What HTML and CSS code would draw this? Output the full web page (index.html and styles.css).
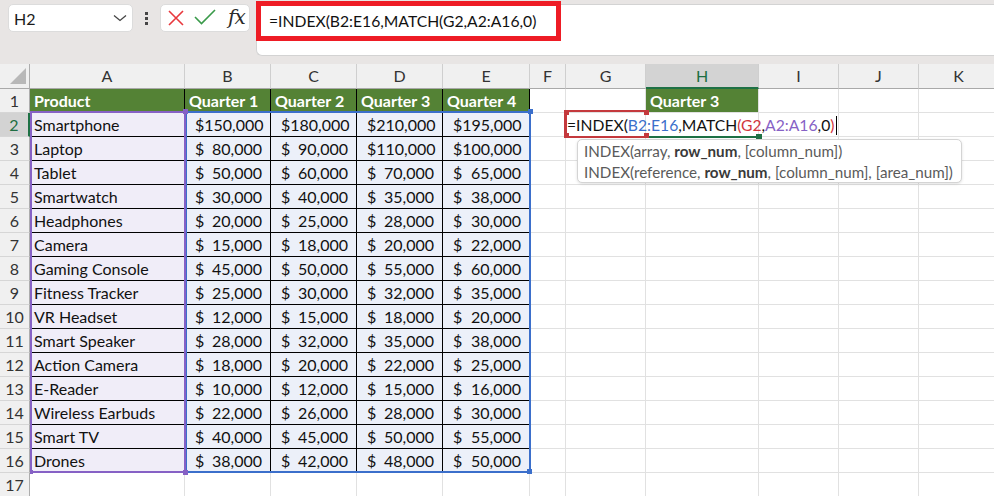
FILE: index.html
```html
<!DOCTYPE html>
<html lang="en">
<head>
    <meta charset="UTF-8">
    <title>INDEX MATCH</title>
    <link rel="stylesheet" href="styles.css">
</head>
<body>
<div class="app">
    <div class="toolbar">
        <div class="namebox">
            <span>H2</span>
            <svg width="14" height="8" viewBox="0 0 14 8"><path d="M1 1.5 L7 6.5 L13 1.5" fill="none" stroke="#444" stroke-width="1.3"/></svg>
        </div>
        <div class="more"><i></i><i></i><i></i></div>
        <div class="fxbox">
            <svg class="ico" width="56" height="26" viewBox="0 0 56 26">
                <path d="M8 6 L22 20 M22 6 L8 20" stroke="#e8383d" stroke-width="1.6" fill="none"/>
                <path d="M34 12 L40.5 18.5 L54 5" stroke="#3a9a4a" stroke-width="1.6" fill="none"/>
            </svg>
            <span class="fx">fx</span>
        </div>
        <div class="formula">
            <span class="ftext">=INDEX(B2:E16,MATCH(G2,A2:A16,0)</span>
            <div class="mark"></div>
        </div>
    </div>

    <div class="sheet">
        <div class="row head">
            <div class="corner"><svg width="16" height="16" viewBox="0 0 16 16"><polygon points="16,0 16,16 0,16" fill="#b8b8b8"/></svg></div>
            <div>A</div><div>B</div><div>C</div><div>D</div><div>E</div><div>F</div><div>G</div><div class="sel">H</div><div>I</div><div>J</div><div>K</div>
        </div>
        <div class="row">
            <div class="rh">1</div>
            <div class="t hd">Product</div><div class="t hd">Quarter 1</div><div class="t hd">Quarter 2</div><div class="t hd">Quarter 3</div><div class="t hd">Quarter 4</div>
            <div class="c"></div><div class="c"></div><div class="hd">Quarter 3</div><div class="c"></div><div class="c"></div><div class="c"></div>
        </div>
        <div class="row">
            <div class="rh sel">2</div>
            <div class="t pa">Smartphone</div>
            <div class="t bl n"><span>$</span><span>150,000</span></div><div class="t bl n"><span>$</span><span>180,000</span></div><div class="t bl n"><span>$</span><span>210,000</span></div><div class="t bl n"><span>$</span><span>195,000</span></div>
            <div class="c"></div><div class="c"></div><div class="c"></div><div class="c"></div><div class="c"></div><div class="c"></div>
        </div>
        <div class="row">
            <div class="rh">3</div>
            <div class="t pa">Laptop</div>
            <div class="t bl n"><span>$</span><span>80,000</span></div><div class="t bl n"><span>$</span><span>90,000</span></div><div class="t bl n"><span>$</span><span>110,000</span></div><div class="t bl n"><span>$</span><span>100,000</span></div>
            <div class="c"></div><div class="c"></div><div class="c"></div><div class="c"></div><div class="c"></div><div class="c"></div>
        </div>
        <div class="row">
            <div class="rh">4</div>
            <div class="t pa">Tablet</div>
            <div class="t bl n"><span>$</span><span>50,000</span></div><div class="t bl n"><span>$</span><span>60,000</span></div><div class="t bl n"><span>$</span><span>70,000</span></div><div class="t bl n"><span>$</span><span>65,000</span></div>
            <div class="c"></div><div class="c"></div><div class="c"></div><div class="c"></div><div class="c"></div><div class="c"></div>
        </div>
        <div class="row">
            <div class="rh">5</div>
            <div class="t pa">Smartwatch</div>
            <div class="t bl n"><span>$</span><span>30,000</span></div><div class="t bl n"><span>$</span><span>40,000</span></div><div class="t bl n"><span>$</span><span>35,000</span></div><div class="t bl n"><span>$</span><span>38,000</span></div>
            <div class="c"></div><div class="c"></div><div class="c"></div><div class="c"></div><div class="c"></div><div class="c"></div>
        </div>
        <div class="row">
            <div class="rh">6</div>
            <div class="t pa">Headphones</div>
            <div class="t bl n"><span>$</span><span>20,000</span></div><div class="t bl n"><span>$</span><span>25,000</span></div><div class="t bl n"><span>$</span><span>28,000</span></div><div class="t bl n"><span>$</span><span>30,000</span></div>
            <div class="c"></div><div class="c"></div><div class="c"></div><div class="c"></div><div class="c"></div><div class="c"></div>
        </div>
        <div class="row">
            <div class="rh">7</div>
            <div class="t pa">Camera</div>
            <div class="t bl n"><span>$</span><span>15,000</span></div><div class="t bl n"><span>$</span><span>18,000</span></div><div class="t bl n"><span>$</span><span>20,000</span></div><div class="t bl n"><span>$</span><span>22,000</span></div>
            <div class="c"></div><div class="c"></div><div class="c"></div><div class="c"></div><div class="c"></div><div class="c"></div>
        </div>
        <div class="row">
            <div class="rh">8</div>
            <div class="t pa">Gaming Console</div>
            <div class="t bl n"><span>$</span><span>45,000</span></div><div class="t bl n"><span>$</span><span>50,000</span></div><div class="t bl n"><span>$</span><span>55,000</span></div><div class="t bl n"><span>$</span><span>60,000</span></div>
            <div class="c"></div><div class="c"></div><div class="c"></div><div class="c"></div><div class="c"></div><div class="c"></div>
        </div>
        <div class="row">
            <div class="rh">9</div>
            <div class="t pa">Fitness Tracker</div>
            <div class="t bl n"><span>$</span><span>25,000</span></div><div class="t bl n"><span>$</span><span>30,000</span></div><div class="t bl n"><span>$</span><span>32,000</span></div><div class="t bl n"><span>$</span><span>35,000</span></div>
            <div class="c"></div><div class="c"></div><div class="c"></div><div class="c"></div><div class="c"></div><div class="c"></div>
        </div>
        <div class="row">
            <div class="rh">10</div>
            <div class="t pa">VR Headset</div>
            <div class="t bl n"><span>$</span><span>12,000</span></div><div class="t bl n"><span>$</span><span>15,000</span></div><div class="t bl n"><span>$</span><span>18,000</span></div><div class="t bl n"><span>$</span><span>20,000</span></div>
            <div class="c"></div><div class="c"></div><div class="c"></div><div class="c"></div><div class="c"></div><div class="c"></div>
        </div>
        <div class="row">
            <div class="rh">11</div>
            <div class="t pa">Smart Speaker</div>
            <div class="t bl n"><span>$</span><span>28,000</span></div><div class="t bl n"><span>$</span><span>32,000</span></div><div class="t bl n"><span>$</span><span>35,000</span></div><div class="t bl n"><span>$</span><span>38,000</span></div>
            <div class="c"></div><div class="c"></div><div class="c"></div><div class="c"></div><div class="c"></div><div class="c"></div>
        </div>
        <div class="row">
            <div class="rh">12</div>
            <div class="t pa">Action Camera</div>
            <div class="t bl n"><span>$</span><span>18,000</span></div><div class="t bl n"><span>$</span><span>20,000</span></div><div class="t bl n"><span>$</span><span>22,000</span></div><div class="t bl n"><span>$</span><span>25,000</span></div>
            <div class="c"></div><div class="c"></div><div class="c"></div><div class="c"></div><div class="c"></div><div class="c"></div>
        </div>
        <div class="row">
            <div class="rh">13</div>
            <div class="t pa">E-Reader</div>
            <div class="t bl n"><span>$</span><span>10,000</span></div><div class="t bl n"><span>$</span><span>12,000</span></div><div class="t bl n"><span>$</span><span>15,000</span></div><div class="t bl n"><span>$</span><span>16,000</span></div>
            <div class="c"></div><div class="c"></div><div class="c"></div><div class="c"></div><div class="c"></div><div class="c"></div>
        </div>
        <div class="row">
            <div class="rh">14</div>
            <div class="t pa">Wireless Earbuds</div>
            <div class="t bl n"><span>$</span><span>22,000</span></div><div class="t bl n"><span>$</span><span>26,000</span></div><div class="t bl n"><span>$</span><span>28,000</span></div><div class="t bl n"><span>$</span><span>30,000</span></div>
            <div class="c"></div><div class="c"></div><div class="c"></div><div class="c"></div><div class="c"></div><div class="c"></div>
        </div>
        <div class="row">
            <div class="rh">15</div>
            <div class="t pa">Smart TV</div>
            <div class="t bl n"><span>$</span><span>40,000</span></div><div class="t bl n"><span>$</span><span>45,000</span></div><div class="t bl n"><span>$</span><span>50,000</span></div><div class="t bl n"><span>$</span><span>55,000</span></div>
            <div class="c"></div><div class="c"></div><div class="c"></div><div class="c"></div><div class="c"></div><div class="c"></div>
        </div>
        <div class="row">
            <div class="rh">16</div>
            <div class="t pa">Drones</div>
            <div class="t bl n"><span>$</span><span>38,000</span></div><div class="t bl n"><span>$</span><span>42,000</span></div><div class="t bl n"><span>$</span><span>48,000</span></div><div class="t bl n"><span>$</span><span>50,000</span></div>
            <div class="c"></div><div class="c"></div><div class="c"></div><div class="c"></div><div class="c"></div><div class="c"></div>
        </div>
        <div class="row">
            <div class="rh">17</div>
            <div class="c"></div><div class="c"></div><div class="c"></div><div class="c"></div><div class="c"></div><div class="c"></div><div class="c"></div><div class="c"></div><div class="c"></div><div class="c"></div><div class="c"></div>
        </div>

        <!-- reference highlights while editing -->
        <div class="rng rng-blue"></div>
        <div class="rng rng-purple"></div>
        <div class="sq sq-blue" style="left:528px;top:45px"></div>
        <div class="sq sq-blue" style="left:527px;top:405px"></div>
        <div class="sq sq-purple" style="left:183px;top:45px"></div>
        <div class="sq sq-purple" style="left:183px;top:406px"></div>
        <div class="sq sq-purple small" style="left:30px;top:406px"></div>
        <div class="rng rng-red"></div>
        <div class="sq sq-red" style="left:564px;top:46px"></div>
        <div class="sq sq-red" style="left:644px;top:46px"></div>
        <div class="sq sq-red" style="left:564px;top:69px"></div>
        <div class="sq sq-red" style="left:644px;top:69px"></div>
        <div class="active-line"></div>
        <div class="sq sq-green" style="left:756px;top:70px"></div>

        <div class="edit">=INDEX(<span class="r-blue">B2:E16</span>,MATCH<span class="r-red">(G2</span>,<span class="r-purple">A2:A16</span>,0<span class="r-red">)</span><span class="caret"></span></div>

        <div class="tip">
            <div>INDEX(array, <b>row_num</b>, [column_num])</div>
            <div>INDEX(reference, <b>row_num</b>, [column_num], [area_num])</div>
        </div>
    </div>
</div>
</body>
</html>
```

FILE: styles.css
```css
* {
    box-sizing: border-box;
}
body {
    margin: 0;
    font-family: Lato, "Open Sans", sans-serif;
    background-color: #fff;
    color: #111;
}
.app {
    width: 994px;
    height: 496px;
    overflow: hidden;
}

/* ribbon strip with name box and formula bar */
.toolbar {
    height: 64px;
    background-color: #e8e5e4;
    display: flex;
    align-items: flex-start;
    padding: 4px 0 0 8px;
}
.namebox {
    width: 125px;
    height: 28px;
    background-color: #fff;
    border: 1px solid #dcdcdc;
    border-radius: 5px;
    display: flex;
    align-items: center;
    justify-content: space-between;
    padding: 0 5px 0 5px;
    font-size: 16px;
    color: #1b1b1b;
}
.more {
    width: 27px;
    height: 28px;
    display: flex;
    flex-direction: column;
    align-items: center;
    justify-content: center;
    gap: 2px;
}
.more i {
    display: block;
    width: 3px;
    height: 3px;
    background-color: #454545;
}
.fxbox {
    width: 90px;
    height: 28px;
    background-color: #fff;
    border: 1px solid #dcdcdc;
    border-radius: 5px;
    display: flex;
    align-items: center;
}
.fxbox .ico {
    display: block;
}
.fx {
    font-family: "DejaVu Serif", "Liberation Serif", serif;
    font-style: italic;
    font-size: 20px;
    color: #2b2b2b;
    margin-left: 11px;
    margin-top: -3px;
    letter-spacing: -1px;
}
.formula {
    flex: 1;
    margin-left: 6px;
    height: 52px;
    background-color: #fff;
    border: 1px solid #d3d3d3;
    border-right: none;
    border-radius: 0 0 0 6px;
    position: relative;
    padding: 7px 0 0 12px;
    font-size: 15.7px;
    line-height: 18px;
    color: #111;
}
.formula .mark {
    position: absolute;
    left: -1px;
    top: -4px;
    width: 305px;
    height: 40px;
    border: 5px solid #ee1c25;
}

/* grid */
.sheet {
    position: relative;
    width: 994px;
}
.row {
    display: grid;
    grid-template-columns: 30px 155px 86px 86px 86px 87px 36px 80px 113px 80px 80px 80px;
    height: 24px;
}
.row > div {
    border-right: 1px solid #e1e1e1;
    border-bottom: 1px solid #e1e1e1;
    line-height: 23px;
    font-size: 16px;
    white-space: nowrap;
    overflow: hidden;
    padding: 0 4px;
}
.row.head {
    height: 25px;
}
.row.head > div {
    background-color: #f0f0f0;
    border-right-color: #cfcfcf;
    border-bottom-color: #a9a9a9;
    text-align: center;
    color: #333;
    line-height: 24px;
    padding: 0;
}
.row.head > .corner {
    display: flex;
    align-items: flex-end;
    justify-content: flex-end;
    padding: 0 3px 4px 0;
    border-right-color: #adadad;
}
.row.head > .sel {
    background-color: #d3d3d3;
    color: #1e6e42;
    border-bottom: 2px solid #1e7145;
}
.row > .rh {
    background-color: #f0f0f0;
    text-align: center;
    color: #333;
    padding: 0;
    border-right-color: #adadad;
    border-bottom-color: #d6d6d6;
}
.row > .rh.sel {
    background-color: #d3d3d3;
    color: #1e6e42;
    border-right: 2px solid #1e7145;
}
.row > .t {
    border-right-color: #000;
    border-bottom-color: #000;
}
.row > .hd {
    background-color: #548235;
    color: #fff;
    font-weight: 700;
}
.row > .pa {
    background-color: #f0edf8;
}
.row > .bl {
    background-color: #ecf0f9;
}
.row > .n {
    display: flex;
    justify-content: space-between;
    padding: 0 8px 0 10px;
}

/* range highlights drawn over the cells */
.rng {
    position: absolute;
    border: 2px solid;
}
.rng-purple {
    left: 30px;
    top: 47px;
    width: 156px;
    height: 362px;
    border-color: #8661c5;
}
.rng-blue {
    left: 185px;
    top: 47px;
    width: 346px;
    height: 362px;
    border-color: #3b6fcb;
}
.rng-red {
    left: 564px;
    top: 46px;
    width: 85px;
    height: 28px;
    border-color: #c4393d;
    border-left-width: 3px;
    border-right: none;
}
.sq {
    position: absolute;
    width: 5px;
    height: 5px;
}
.sq.small {
    width: 3px;
    height: 4px;
}
.sq-purple {
    background-color: #8661c5;
}
.sq-blue {
    background-color: #3b6fcb;
}
.sq-red {
    background-color: #c4393d;
}
.sq-green {
    background-color: #1e7145;
    width: 6px;
}
.active-line {
    position: absolute;
    left: 649px;
    top: 72px;
    width: 111px;
    height: 2px;
    background-color: #1e7145;
}
.edit {
    position: absolute;
    left: 567px;
    top: 49px;
    height: 24px;
    line-height: 24px;
    font-size: 15.7px;
    color: #111;
    white-space: nowrap;
}
.r-blue {
    color: #3b6fcb;
}
.r-red {
    color: #d2363c;
}
.r-purple {
    color: #8661c5;
}
.caret {
    display: inline-block;
    width: 1px;
    height: 19px;
    background-color: #000;
    margin-left: 2px;
    vertical-align: -4px;
}
.tip {
    position: absolute;
    left: 577px;
    top: 75px;
    width: 385px;
    height: 44px;
    background-color: #fff;
    border: 1px solid #d4d4d4;
    border-radius: 5px;
    box-shadow: 0 1px 3px rgba(0,0,0,0.12);
    padding: 1px 0 0 6px;
    font-size: 15.2px;
    line-height: 20.5px;
    color: #5a5a5a;
}
.tip b {
    color: #3a3a3a;
}
```
